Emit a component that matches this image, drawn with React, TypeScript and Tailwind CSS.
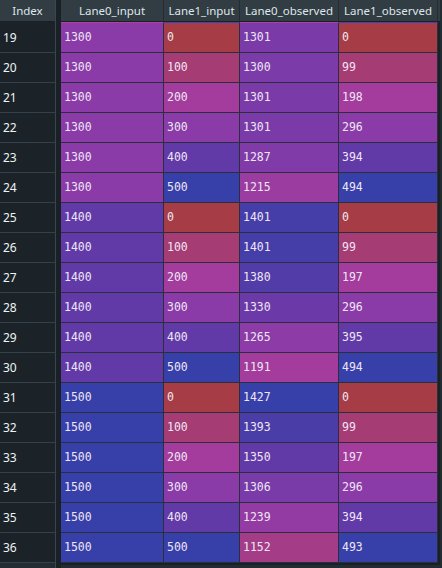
import React from 'react';

type Row = [number, number, number, number, number];

const rows: Row[] = [
  [19, 1300, 0, 1301, 0],
  [20, 1300, 100, 1300, 99],
  [21, 1300, 200, 1301, 198],
  [22, 1300, 300, 1301, 296],
  [23, 1300, 400, 1287, 394],
  [24, 1300, 500, 1215, 494],
  [25, 1400, 0, 1401, 0],
  [26, 1400, 100, 1401, 99],
  [27, 1400, 200, 1380, 197],
  [28, 1400, 300, 1330, 296],
  [29, 1400, 400, 1265, 395],
  [30, 1400, 500, 1191, 494],
  [31, 1500, 0, 1427, 0],
  [32, 1500, 100, 1393, 99],
  [33, 1500, 200, 1350, 197],
  [34, 1500, 300, 1306, 296],
  [35, 1500, 400, 1239, 394],
  [36, 1500, 500, 1152, 493],
];

// red -> magenta -> purple -> blue
const stops = [
  [166, 61, 70],
  [166, 60, 116],
  [163, 60, 156],
  [138, 59, 168],
  [98, 58, 168],
  [55, 63, 168],
];

function cmap(t: number) {
  const x = Math.max(0, Math.min(1, t)) * (stops.length - 1);
  const i = Math.min(stops.length - 2, Math.floor(x));
  const f = x - i;
  const c = stops[i].map((v, k) => Math.round(v + (stops[i + 1][k] - v) * f));
  return `rgb(${c[0]}, ${c[1]}, ${c[2]})`;
}

const cols = [
  { name: 'Lane0_input', w: 'w-[103px]', top: 'border-t-[#b2409e]', t: (v: number) => (v - 1000) / 500 },
  { name: 'Lane1_input', w: 'w-[76px]', top: 'border-t-[#3a44b4]', t: (v: number) => v / 500 },
  { name: 'Lane0_observed', w: 'w-[99px]', top: 'border-t-[#b2409e]', t: (v: number) => (v - 1034) / 393 },
  { name: 'Lane1_observed', w: 'w-[99px]', top: 'border-t-[#3a44b4]', t: (v: number) => v / 494 },
];

export default function App() {
  return (
    <div className="w-[442px] h-[568px] bg-[#232c33] flex overflow-hidden" style={{ fontFamily: '"Noto Sans", sans-serif' }}>
      {/* index column */}
      <div className="w-[56px] flex flex-col border-r border-[#3a464e]">
        <div className="h-[22px] bg-[#313c43] border-b border-[#1a2126] flex items-center justify-center text-[11.5px] text-[#dfe6ea]">
          Index
        </div>
        <div className="border-t border-[#1b2329]" />
        {rows.map((r) => (
          <div key={r[0]} className="h-[30px] bg-[#1b2329] border-b border-[#34414a] flex items-center pl-[3px] text-[12px] text-[#eef3f5]">
            {r[0]}
          </div>
        ))}
      </div>

      <div className="w-[5px] bg-[#1a2126]" />

      {/* data */}
      <div className="flex flex-col">
        <div className="h-[22px] bg-[#313c43] border-b border-[#1a2126] flex">
          {cols.map((c) => (
            <div key={c.name} className={`${c.w} border-r border-[#232c33] flex items-center justify-center text-[11.5px] text-[#dfe6ea]`}>
              {c.name}
            </div>
          ))}
        </div>
        <div className="flex bg-[#2a2f3c] border-r-2 border-b-2 border-[#1a2126]">
          {cols.map((c, ci) => (
            <div key={c.name} className={`${c.w} flex flex-col border-t ${c.top} border-r border-r-[#2b2f3d]`}>
              {rows.map((r) => {
                const v = r[ci + 1];
                return (
                  <div
                    key={r[0]}
                    className="h-[30px] border-b border-[#2b2f3d] flex items-center pl-[3px] text-[11.5px] text-[#efe6f4]"
                    style={{ backgroundColor: cmap(c.t(v)), fontFamily: '"DejaVu Sans Mono", monospace' }}
                  >
                    {v}
                  </div>
                );
              })}
            </div>
          ))}
        </div>
      </div>
    </div>
  );
}
